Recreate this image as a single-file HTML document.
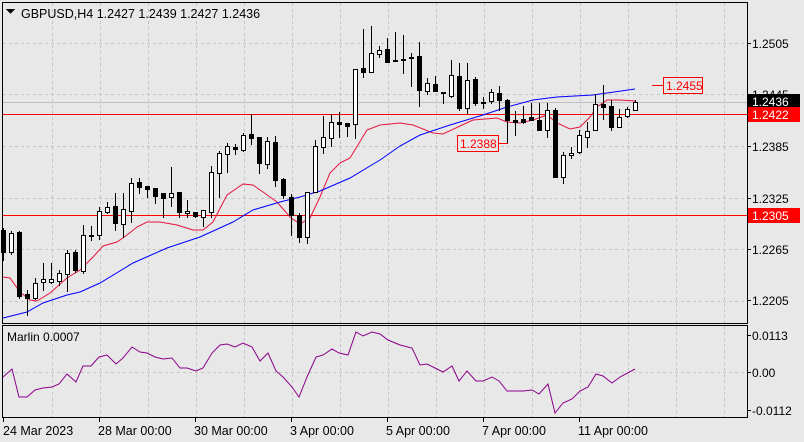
<!DOCTYPE html>
<html><head><meta charset="utf-8"><style>
html,body{margin:0;padding:0;background:#e8e8e8;}
svg{display:block;font-family:"Liberation Sans",sans-serif;}
</style></head><body>
<svg id="s" width="804" height="442" viewBox="0 0 804 442" xmlns="http://www.w3.org/2000/svg" shape-rendering="crispEdges">
<rect x="0" y="0" width="804" height="442" fill="#e8e8e8"/>
<g id="grid" stroke="#c4c4c4" stroke-dasharray="3,3" stroke-width="1"></g>
<line x1="3" y1="102.5" x2="747" y2="102.5" stroke="#c0c0c0"/>
<line x1="3" y1="114.5" x2="747" y2="114.5" stroke="#ff0000"/>
<line x1="3" y1="215.5" x2="747" y2="215.5" stroke="#ff0000"/>
<g id="ma" fill="none" shape-rendering="auto"></g>
<g id="candles"></g>
<!-- annotations -->
<line x1="652" y1="85.5" x2="663" y2="85.5" stroke="#ff0000"/>
<rect x="663.5" y="77.5" width="39" height="16" fill="#e8e8e8" stroke="#ff0000"/>
<text x="666" y="90" font-size="12" fill="#ff0000">1.2455</text>
<line x1="498" y1="143.5" x2="508" y2="143.5" stroke="#ff0000"/>
<rect x="457.5" y="135.5" width="41" height="16" fill="#e8e8e8" stroke="#ff0000"/>
<text x="460" y="148" font-size="12" fill="#ff0000">1.2388</text>
<!-- frames -->
<rect x="2.5" y="2.5" width="745" height="321" fill="none" stroke="#000"/>
<rect x="2.5" y="325.5" width="745" height="92" fill="none" stroke="#000"/>
<!-- title -->
<polygon points="6,9 15,9 10.5,14" fill="#000"/>
<text x="21" y="18" font-size="12.5" fill="#000">GBPUSD,H4  1.2427 1.2439 1.2427 1.2436</text>
<!-- price axis -->
<g font-size="12" fill="#000">
<line x1="747" y1="43.5" x2="751" y2="43.5" stroke="#000"/><text x="752" y="48">1.2505</text>
<line x1="747" y1="94.5" x2="751" y2="94.5" stroke="#000"/><text x="752" y="99">1.2445</text>
<line x1="747" y1="146.5" x2="751" y2="146.5" stroke="#000"/><text x="752" y="151">1.2385</text>
<line x1="747" y1="198.5" x2="751" y2="198.5" stroke="#000"/><text x="752" y="203">1.2325</text>
<line x1="747" y1="249.5" x2="751" y2="249.5" stroke="#000"/><text x="752" y="254">1.2265</text>
<line x1="747" y1="300.5" x2="751" y2="300.5" stroke="#000"/><text x="752" y="305">1.2205</text>
</g>
<rect x="748" y="94" width="52" height="15" fill="#000"/>
<text x="752" y="106" font-size="12" fill="#fff">1.2436</text>
<rect x="748" y="107" width="52" height="15" fill="#ff0000"/>
<text x="752" y="119" font-size="12" fill="#fff">1.2422</text>
<rect x="748" y="208" width="52" height="15" fill="#ff0000"/>
<text x="752" y="220" font-size="12" fill="#fff">1.2305</text>
<!-- indicator -->
<text x="7" y="341" font-size="12" fill="#000">Marlin 0.0007</text>
<g font-size="12" fill="#000">
<line x1="747" y1="335.5" x2="751" y2="335.5" stroke="#000"/><text x="752" y="340">0.0113</text>
<line x1="747" y1="372.5" x2="751" y2="372.5" stroke="#000"/><text x="752" y="377">0.00</text>
<line x1="747" y1="410.5" x2="751" y2="410.5" stroke="#000"/><text x="752" y="415">-0.0112</text>
</g>
<polyline fill="none" stroke="#8b008b" stroke-width="1" shape-rendering="auto" points="3,377 12,369 19,397 27,397 35,390 43,388 52,387 59,384 67,374 76,382 83,366 91,366 99,357 107,355 116,364 123,358 132,347 140,352 147,353 155,357 163,359 172,358 180,368 187,368 196,371 203,368 212,353 220,345 227,344 235,347 243,343 252,347 260,361 268,353 276,371 283,377 292,387 299,397 307,377 316,357 323,355 332,349 339,353 348,355 356,332 363,336 372,332 380,334 388,340 400,345 412,348 420,365 427,364 435,368 443,372 452,366 459,381 467,371 476,381 483,381 492,377 499,381 507,391 523,391 532,390 539,394 548,384 555,413 563,403 572,399 580,391 588,387 596,374 603,376 612,383 620,377 635,369"/>
<!-- time axis -->
<g stroke="#000">
<line x1="3.5" y1="418" x2="3.5" y2="422"/><line x1="99.5" y1="418" x2="99.5" y2="422"/><line x1="195.5" y1="418" x2="195.5" y2="422"/><line x1="291.5" y1="418" x2="291.5" y2="422"/><line x1="387.5" y1="418" x2="387.5" y2="422"/><line x1="483.5" y1="418" x2="483.5" y2="422"/><line x1="579.5" y1="418" x2="579.5" y2="422"/>
</g>
<g font-size="12.5" fill="#000">
<text x="3" y="435">24 Mar 2023</text>
<text x="98" y="435">28 Mar 00:00</text>
<text x="194" y="435">30 Mar 00:00</text>
<text x="290" y="435">3 Apr 00:00</text>
<text x="386" y="435">5 Apr 00:00</text>
<text x="482" y="435">7 Apr 00:00</text>
<text x="578" y="435">11 Apr 00:00</text>
</g>
</svg>
<script>
var NS="http://www.w3.org/2000/svg";
function el(p,t,a){var e=document.createElementNS(NS,t);for(var k in a)e.setAttribute(k,a[k]);p.appendChild(e);return e;}
var g=document.getElementById("grid");
for(var x=52;x<747;x+=48){el(g,"line",{x1:x+.5,y1:3,x2:x+.5,y2:323});el(g,"line",{x1:x+.5,y1:326,x2:x+.5,y2:417});}
[43,94,146,198,249,301].forEach(function(y){el(g,"line",{x1:3,y1:y+.5,x2:747,y2:y+.5});});
el(g,"line",{x1:3,y1:372.5,x2:747,y2:372.5});
var ma=document.getElementById("ma");
el(ma,"polyline",{stroke:"#e8143c",points:"3,277 10,278 20,292 30,300 37,301 50,293 67,278 80,270 93,257 103,246 117,242 127,235 137,227 147,222 160,222 177,225 193,230 203,230 213,222 227,195 243,184 253,185 263,192 277,202 290,217 300,224 310,218 320,197 330,173 340,163 350,158 367,130 380,125 400,123 413,125 433,133 443,134 460,126 473,120 497,118 507,122 520,123 533,120 547,115 557,123 570,129 580,127 590,117 597,107 607,100 620,100 635,101"});
el(ma,"polyline",{stroke:"#0000ff",points:"3,318 27,312 43,303 67,295 80,292 100,283 133,263 167,248 200,237 233,222 253,210 280,202 300,197 320,191 350,178 380,160 400,146 420,135 450,125 483,115 507,107 533,100 557,97 593,95 635,89"});
var C=[[228,260,230,252,0],[231,254,233,252,1],[231,298,232,296,0],[290,315,294,298,0],[278,299,283,298,1],[263,290,279,282,1],[263,283,279,282,1],[270,285,273,281,1],[250,291,253,274,1],[250,272,252,270,0],[225,273,235,271,1],[226,240,235,236,0],[207,239,211,235,1],[202,213,207,212,1],[193,230,206,223,0],[193,237,209,224,1],[178,222,183,211,1],[178,193,182,187,0],[186,197,186,189,0],[188,203,188,196,0],[193,217,193,198,0],[167,206,193,197,1],[192,217,192,212,0],[200,217,211,213,1],[212,217,212,216,0],[210,226,210,217,1],[166,217,172,212,1],[151,197,153,173,1],[143,172,146,154,1],[144,154,147,149,0],[133,151,135,150,1],[114,144,134,138,0],[137,173,137,163,0],[137,168,141,164,1],[136,186,142,180,0],[178,198,179,195,0],[194,235,197,215,0],[213,242,215,237,0],[192,243,192,237,1],[140,192,146,192,1],[116,153,137,147,1],[114,146,122,138,1],[112,137,122,124,0],[123,136,123,126,0],[69,138,69,124,1],[29,77,68,72,0],[26,72,53,72,1],[46,57,50,54,1],[38,62,49,62,0],[32,61,60,61,0],[35,73,59,60,0],[53,86,57,58,0],[42,106,56,90,0],[78,94,83,91,1],[76,91,84,91,0],[92,103,92,93,0],[60,97,75,96,1],[63,110,76,108,0],[63,113,80,108,1],[77,105,79,103,0],[97,108,102,103,0],[89,103,92,101,1],[86,110,93,100,0],[99,143,100,120,0],[111,135,120,122,0],[106,123,119,122,0],[103,120,117,120,0],[103,130,120,130,0],[103,137,110,130,1],[108,177,110,177,0],[152,183,155,177,1],[147,158,153,155,1],[130,153,135,152,1],[122,147,131,137,1],[94,130,104,130,1],[85,119,104,107,0],[100,130,106,127,0],[109,127,117,127,1],[107,117,109,116,1],[100,110,102,110,1]];
var cg=document.getElementById("candles");
C.forEach(function(c,i){var x=3+8*i;
el(cg,"line",{x1:x+.5,y1:c[0],x2:x+.5,y2:c[1]+1,stroke:"#000"});
var h=Math.max(c[3]-c[2],1);
if(c[4])el(cg,"rect",{x:x-1.5,y:c[2]+.5,width:4,height:h,fill:"#fff",stroke:"#000"});
else el(cg,"rect",{x:x-2,y:c[2],width:5,height:h+1,fill:"#000"});
});
</script>
</body></html>
